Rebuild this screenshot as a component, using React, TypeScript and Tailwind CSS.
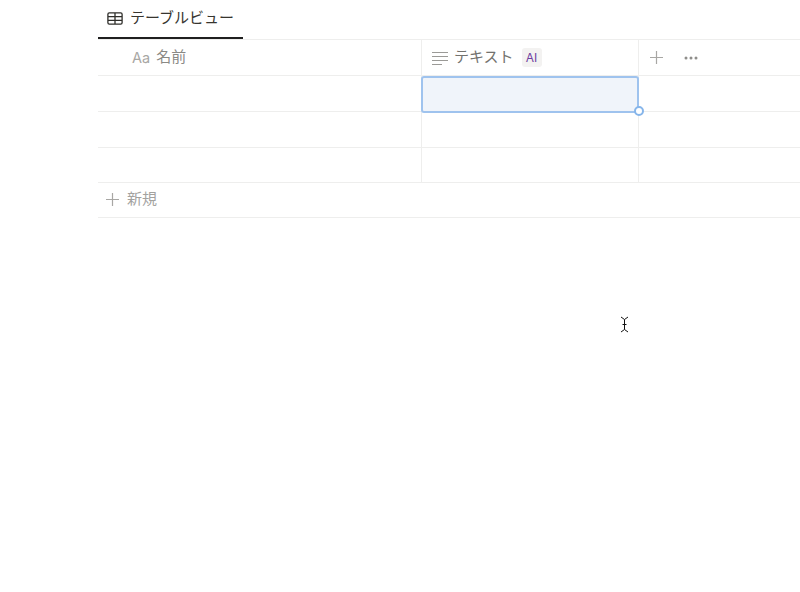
import React from "react";

const font = { fontFamily: '"Inter", "Noto Sans CJK JP", sans-serif' };

function TableIcon() {
  return (
    <svg width="16" height="13" viewBox="0 0 16 13" fill="none" stroke="#2f2e2a" strokeWidth="1.3">
      <rect x="0.9" y="0.9" width="14.2" height="11.2" rx="1.4" />
      <path d="M1 4.600h14M1 8.300h14M8 1v11" />
    </svg>
  );
}

function LinesIcon() {
  return (
    <svg width="16" height="14" viewBox="0 0 16 14" fill="none" stroke="#9b9a97" strokeWidth="1.1">
      <path d="M0 1.500h16M0 5.500h16M0 9.500h16M0 13.500h10" />
    </svg>
  );
}

function Plus({ size = 13 }: { size?: number }) {
  return (
    <svg width={size} height={size} viewBox="0 0 13 13" fill="none" stroke="#a8a7a4" strokeWidth="1.2">
      <path d="M6.500 0v13M0 6.500h13" />
    </svg>
  );
}

function Row({ height }: { height: string }) {
  return (
    <div className={`flex border-b border-[#eeeeed] ${height}`}>
      <div className="w-[324px] shrink-0 border-r border-[#eeeeed]" />
      <div className="w-[217px] shrink-0 border-r border-[#eeeeed]" />
      <div className="flex-1" />
    </div>
  );
}

export default function App() {
  return (
    <div className="relative h-[592px] w-[800px] overflow-hidden bg-white pl-[98px]" style={font}>
      <div className="flex h-[40px] border-b border-[#eeeeed]">
        <div className="flex h-[39px] w-[145px] items-center gap-[8px] border-b-2 border-[#1f1f1f] pb-[1px] pl-[9px]">
          <TableIcon />
          <span className="-ml-[1px] text-[15px] leading-[20px] text-[#37352f]">テーブルビュー</span>
        </div>
      </div>
      <div className="flex h-[36px] border-b border-[#eeeeed]">
        <div className="flex w-[324px] shrink-0 items-center border-r border-[#eeeeed] pl-[34px] text-[15px]">
          <span className="mr-[6px] text-[14.5px] text-[#a8a7a4]">Aa</span>
          <span className="text-[#8a8985]">名前</span>
        </div>
        <div className="flex w-[217px] shrink-0 items-center border-r border-[#eeeeed] pl-[10px]">
          <LinesIcon />
          <span className="ml-[6px] text-[15px] text-[#73726e]">テキスト</span>
          <span className="ml-[8px] flex h-[19px] w-[20px] items-center justify-center rounded-[3px] bg-[#f3f2f1] text-[12px] text-[#6f3fa0]">AI</span>
        </div>
        <div className="flex flex-1 items-center pl-[11px]">
          <Plus />
          <svg className="ml-[21px]" width="14" height="4" viewBox="0 0 14 4" fill="#8f8e8b">
            <circle cx="2" cy="2" r="1.500" />
            <circle cx="7" cy="2" r="1.500" />
            <circle cx="12" cy="2" r="1.500" />
          </svg>
        </div>
      </div>
      <Row height="h-[36px]" />
      <Row height="h-[36px]" />
      <Row height="h-[35px]" />
      <div className="flex h-[35px] items-center border-b border-[#eeeeed] pb-[1px] pl-[8px]">
        <Plus />
        <span className="ml-[8px] text-[15px] text-[#a3a29f]">新規</span>
      </div>

      <div className="absolute left-[421px] top-[76px] h-[37px] w-[218px] rounded-[3px] border-[2.5px] border-[#9fc3ee] bg-[#f0f4fa]" />
      <div className="absolute left-[634px] top-[106px] h-[10px] w-[10px] rounded-full border-2 border-[#86b5ea] bg-white" />

      <svg className="absolute left-[619px] top-[316px]" width="11" height="17" viewBox="0 0 11 17" fill="none" stroke="#111" strokeWidth="1">
        <path d="M2 1l3.500 2.500 3.500-2.500M5.500 3.500v10M2 16l3.500-2.500 3.500 2.500M3.500 8.500h4" />
      </svg>
    </div>
  );
}
